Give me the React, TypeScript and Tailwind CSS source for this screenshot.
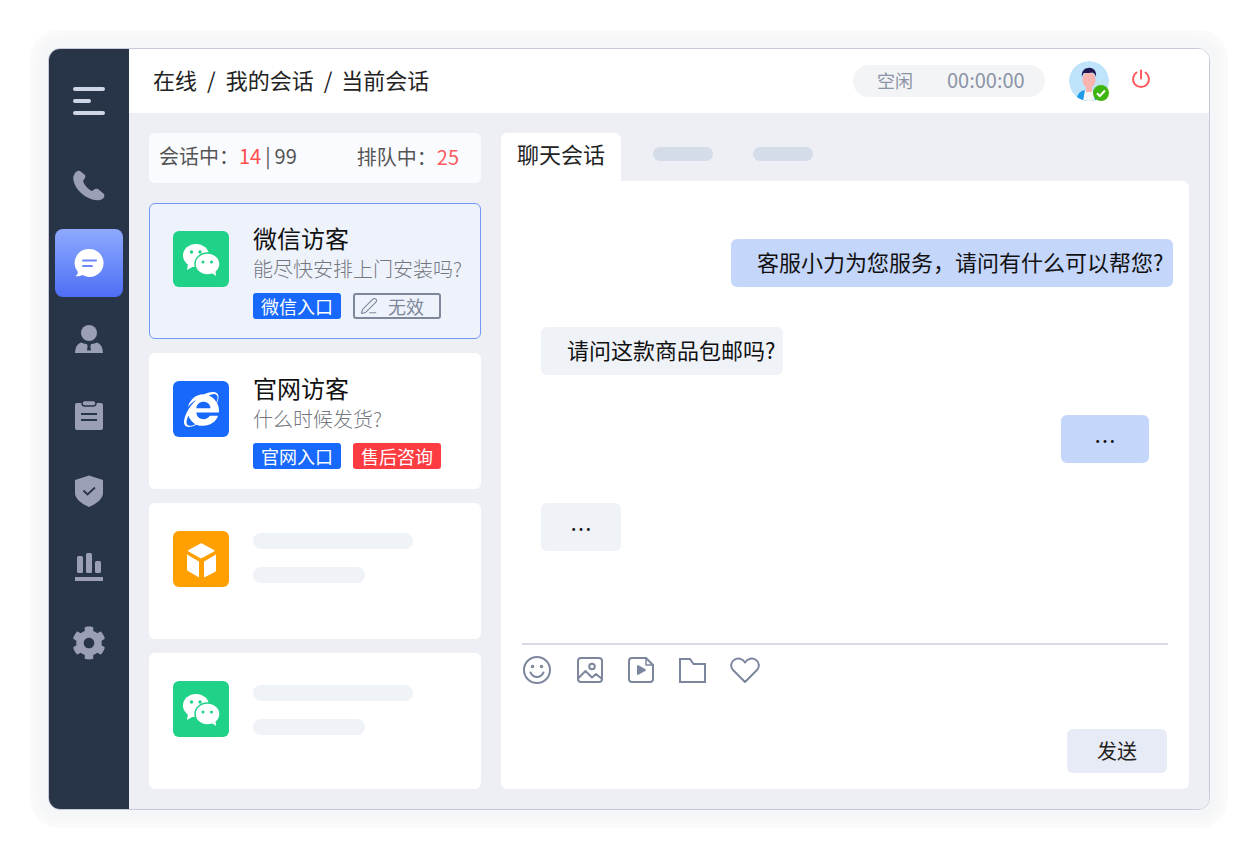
import React from "react";
import { PenLine } from "lucide-react";
import { FaCog, FaInternetExplorer } from "react-icons/fa";

const cjk = { fontFamily: '"Noto Sans CJK SC", "Noto Sans", sans-serif' };

const G = "#9a9fb6";
const COLON = "\uFF1A";
const COMMA = "\uFF0C";

function MenuIcon() {
  return (
    <svg width="32" height="28" viewBox="0 0 32 28" fill="#ced5e4">
      <rect x="0" y="0" width="32" height="4" rx="2" />
      <rect x="0" y="12" width="18" height="4" rx="2" />
      <rect x="0" y="24" width="32" height="4" rx="2" />
    </svg>
  );
}
function PhoneIcon() {
  return (
    <svg width="36" height="36" viewBox="0 0 36 36" fill={G}>
      <path d="M3 6C1 9 3 17 9 23c6 6 14 9 20 8 4-1 5-4 4-6l-6-5c-1-.5-2-.5-3 0l-3 2c-3-1-8-6-9-10l2-3c.5-1 .5-2 0-3L9 2C7 1 4 3 3 6Z" />
    </svg>
  );
}
function ChatIcon() {
  return (
    <svg width="30" height="30" viewBox="0 0 30 30">
      <path d="M15.500 1a14 14 0 1 1-7 26.100c-1.800 .9-4 1.300-7 1.200 1.500-1.300 2.400-2.800 2.500-4.300A14 14 0 0 1 15.500 1Z" fill="#fff" />
      <rect x="8" y="11.500" width="15" height="2" rx="1" fill="#6a86f8" />
      <rect x="8" y="17" width="11" height="2" rx="1" fill="#6a86f8" />
    </svg>
  );
}
function UserIcon() {
  return (
    <svg width="28" height="28" viewBox="0 0 28 28">
      <circle cx="14" cy="8" r="8" fill={G} />
      <path d="M0 28c.5-6 2-9 6-10.500 2.500 1 5 1.500 8 1.500s5.500-.5 8-1.500c4 1.500 5.500 4.500 6 10.500Z" fill={G} />
      <path d="M12 19h4l-.6 2.500.6 4h-4l.6-4Z" fill="#283447" />
    </svg>
  );
}
function ClipIcon() {
  return (
    <svg width="28" height="30" viewBox="0 0 28 30">
      <path d="M2 3h24a2 2 0 0 1 2 2v23a2 2 0 0 1-2 2H2a2 2 0 0 1-2-2V5a2 2 0 0 1 2-2Z" fill={G} />
      <rect x="7" y="0.500" width="14" height="5.500" rx="2.700" fill={G} stroke="#283447" strokeWidth="1.500" />
      <rect x="6" y="13" width="16" height="2" fill="#283447" />
      <rect x="6" y="19" width="16" height="2" fill="#283447" />
    </svg>
  );
}
function ShieldIcon() {
  return (
    <svg width="28" height="32" viewBox="0 0 28 32">
      <path d="M14 0.500 28 5v13c0 6-7 11-14 14C7 29 0 24 0 18V5L14 .5Z" fill={G} />
      <path d="m8.500 15.500 4 4L20 12.500" fill="none" stroke="#283447" strokeWidth="1.800" />
    </svg>
  );
}
function BarsIcon() {
  return (
    <svg width="28" height="28" viewBox="0 0 28 28" fill={G}>
      <rect x="2" y="3" width="6" height="17" rx="1.500" />
      <rect x="11" y="0" width="6" height="20" rx="1.500" />
      <rect x="20" y="8" width="6" height="12" rx="1.500" />
      <rect x="0" y="24" width="28" height="4" />
    </svg>
  );
}

function WeChat() {
  return (
    <svg width="56" height="56" viewBox="0 0 56 56">
      <ellipse cx="23" cy="24.500" rx="13" ry="11.500" fill="#fff" />
      <path d="M15 33l-1 6 7-4Z" fill="#fff" />
      <ellipse cx="34.500" cy="33" rx="12.500" ry="11" fill="#fff" stroke="#20d288" strokeWidth="1.500" />
      <path d="M39 42l4 3-.5-5Z" fill="#fff" />
      <circle cx="18.500" cy="21" r="1.700" fill="#20d288" />
      <circle cx="27" cy="21" r="1.700" fill="#20d288" />
      <circle cx="30" cy="31" r="1.500" fill="#20d288" />
      <circle cx="38.500" cy="31" r="1.500" fill="#20d288" />
    </svg>
  );
}
function Cube() {
  return (
    <svg width="56" height="56" viewBox="0 0 56 56" fill="#fff">
      <path d="M27.500 12.500a2 2 0 0 1 1.500 0l12 6.500a.8 .8 0 0 1 0 1.400L28 27.500 15.500 20.400a.8 .8 0 0 1 0-1.400l12-6.500Z" />
      <path d="M14 23.500 26 30.500V46.500L15 40a2 2 0 0 1-1-2V23.500Z" />
      <path d="M43 23.500 31 30.500V46.500L42 41a2 2 0 0 0 1-2V23.500Z" />
    </svg>
  );
}

function Logo({ bg, children }: { bg: string; children: React.ReactNode }) {
  return (
    <div className={`w-14 h-14 rounded-md shrink-0 flex items-center justify-center ${bg}`}>{children}</div>
  );
}

function Tag({ className, children }: { className: string; children: React.ReactNode }) {
  return (
    <div className={`w-[88px] h-[26px] pb-px rounded-[3px] flex items-center text-[18px] leading-none ${className}`}>
      {children}
    </div>
  );
}

function VisitorCard({
  active,
  logo,
  title,
  sub,
  tags,
}: {
  active?: boolean;
  logo: React.ReactNode;
  title: string;
  sub: string;
  tags: React.ReactNode;
}) {
  return (
    <div
      className={`h-[136px] rounded-md flex gap-6 ${
        active ? "bg-[#eef2fb] border border-[#6f98f7] pl-[23px] pt-[27px]" : "bg-white pl-6 pt-7"
      }`}
    >
      {logo}
      <div className="flex flex-col -mt-[8px]">
        <div className="text-[24px] leading-[30px] text-[#111111]">{title}</div>
        <div className="text-[20px] leading-[28px] font-light text-[#75787f] whitespace-nowrap mt-[2px]">{sub}</div>
        <div className="flex gap-3 mt-[10px]">{tags}</div>
      </div>
    </div>
  );
}

function SkeletonCard({ logo, long }: { logo: React.ReactNode; long?: boolean }) {
  return (
    <div className="h-[136px] bg-white rounded-md flex pl-6 pt-7 gap-6">
      {logo}
      <div className={`flex flex-col ${long ? "pt-[2px]" : "pt-1"} gap-[18px]`}>
        <div className="w-40 h-4 rounded-lg bg-[#eff2f7]" />
        <div className="w-28 h-4 rounded-lg bg-[#eff2f7]" />
      </div>
    </div>
  );
}

function Avatar() {
  return (
    <div className="relative w-10 h-10">
      <svg width="40" height="40" viewBox="0 0 40 40" className="rounded-full">
        <circle cx="20" cy="20" r="20" fill="#bfe3fb" />
        <path d="M7 40c1-7 4-10 9-11h8c5 1 8 4 9 11Z" fill="#1b9be8" />
        <path d="M14 40l2-11h8l2 11Z" fill="#f5f6f8" />
        <rect x="17" y="24" width="6" height="7" fill="#f9b4b0" />
        <ellipse cx="20" cy="19" rx="6.500" ry="8" fill="#f9b4b0" />
        <path d="M13 16c-1-6 3-9 6-9 5-1 9 3 8 9-1-3-2-4-4-4.500-3 .7-6 .7-8 .5-1 1-1.500 2-2 4Z" fill="#1e1650" />
      </svg>
      <div className="absolute right-0 bottom-0 w-4 h-4 rounded-full bg-[#3fb60f] flex items-center justify-center">
        <svg width="12" height="12" viewBox="0 0 12 12" fill="none">
          <path d="m2 6.200 2.800 2.800L10 3.500" stroke="#fff" strokeWidth="2" />
        </svg>
      </div>
    </div>
  );
}

function Power() {
  return (
    <svg width="20" height="20" viewBox="0 0 20 20" fill="none" stroke="#ff5a5f" strokeWidth="2" strokeLinecap="round">
      <path d="M10 1.500v8" />
      <path d="M5.500 3.500a8 8 0 1 0 9 0" />
    </svg>
  );
}

const tb = { fill: "none", stroke: "#7c869d", strokeWidth: 2, strokeLinejoin: "round" as const, strokeLinecap: "round" as const };

function Toolbar() {
  return (
    <div className="flex items-center h-[28px] mt-[11px] pl-px">
      <svg width="28" height="28" viewBox="0 0 28 28" {...tb}>
        <circle cx="14" cy="14" r="13" />
        <path d="M7.500 16.500c1.500 3 4 4.500 6.500 4.500s5-1.500 6.500-4.500" />
        <circle cx="9.500" cy="10.500" r=".8" />
        <circle cx="18.500" cy="10.500" r=".8" />
      </svg>
      <svg width="26" height="26" viewBox="0 0 26 26" className="ml-[26px]" {...tb}>
        <rect x="1" y="1" width="24" height="24" rx="3" />
        <circle cx="15" cy="9.500" r="2.800" />
        <path d="m1.500 21 7-7 6.500 6.500 4-3.500 5.500 4.500" />
      </svg>
      <svg width="26" height="26" viewBox="0 0 26 26" className="ml-[25px]" {...tb}>
        <path d="M4 1h14l7 7v14a3 3 0 0 1-3 3H4a3 3 0 0 1-3-3V4a3 3 0 0 1 3-3Z" />
        <path d="M18 1v7h7" strokeWidth="1.500" />
        <path d="M10 9v8l7-4Z" fill="#7c869d" />
      </svg>
      <svg width="27" height="25" viewBox="0 0 27 25" className="ml-[25px]" {...tb} strokeLinejoin="miter" strokeLinecap="butt">
        <path d="M1 1h10l3.500 5H26v18H1Z" />
      </svg>
      <svg width="30" height="26" viewBox="0 0 30 26" className="ml-[24px]" {...tb}>
        <path d="M15 25 3 13C0 9.500 1 5 4 3c3.500-2.500 8.500-1.500 11 2.500C17.500 1.500 22.500 .5 26 3c3 2 4 6.500 1 10Z" />
      </svg>
    </div>
  );
}

function Bubble({ me, className, children }: { me?: boolean; className: string; children: React.ReactNode }) {
  return (
    <div
      className={`h-12 rounded-md flex items-center text-[22px] leading-none text-[#111111] whitespace-nowrap ${
        me ? "bg-[#c5d6fb]" : "bg-[#eff2f7]"
      } ${className}`}
    >
      {children}
    </div>
  );
}

function NavItem({ active, children }: { active?: boolean; children: React.ReactNode }) {
  return (
    <div
      className={`w-[68px] h-[68px] rounded-lg flex items-center justify-center ${
        active ? "bg-gradient-to-b from-[#8ea9fd] to-[#4f6ef6]" : ""
      }`}
    >
      {children}
    </div>
  );
}

export default function App() {
  return (
    <div className="w-[1258px] h-[858px] bg-white overflow-hidden pl-12 pt-12" style={cjk}>
      <div className="w-[1162px] h-[762px] rounded-xl border border-[#c5c9da] flex overflow-hidden shadow-[0_0_10px_12px_#f5f6f7,0_0_0_18px_#fbfbfc]">
        <aside className="w-20 shrink-0 bg-[#283447] flex flex-col items-center gap-2 pt-[18px]">
          <div className="h-[68px] flex items-center mb-[10px]">
            <MenuIcon />
          </div>
          <NavItem><PhoneIcon /></NavItem>
          <NavItem active><ChatIcon /></NavItem>
          <NavItem><UserIcon /></NavItem>
          <NavItem><ClipIcon /></NavItem>
          <NavItem><ShieldIcon /></NavItem>
          <NavItem><BarsIcon /></NavItem>
          <NavItem><FaCog size={34} color={G} /></NavItem>
        </aside>

        <div className="flex-1 flex flex-col bg-[#eeeff4]">
          <header className="h-16 shrink-0 bg-white flex items-center pl-6 pr-[58px]">
            <div className="text-[22px] leading-none text-[#222222] flex gap-[10px] pb-1">
              <span>在线</span><span>/</span><span>我的会话</span><span>/</span><span className="-ml-px">当前会话</span>
            </div>
            <div className="ml-auto w-48 h-8 rounded-2xl bg-[#f3f4f6] flex items-center pl-6 pb-[2px] text-[#8a93a5]">
              <span className="text-[18px] leading-none">空闲</span>
              <span className="text-[20px] leading-none ml-[34px]">00:00:00</span>
            </div>
            <div className="ml-6"><Avatar /></div>
            <div className="ml-[22px] pb-1"><Power /></div>
          </header>

          <main className="flex-1 flex gap-5 p-5">
            <section className="w-[332px] shrink-0 flex flex-col">
              <div className="h-[50px] rounded-md bg-[#fafbfe] flex items-center justify-between pl-[10px] pr-[22px] text-[20px] leading-none text-[#555555] mb-5">
                <div className="-mt-[4px]">
                  {"会话中" + COLON}<span className="text-[#ff4d4f]">14</span><span className="mx-[4px]">|</span>99
                </div>
                <div className="-mt-[2px]">
                  {"排队中" + COLON}<span className="text-[#ff5a5f]">25</span>
                </div>
              </div>
              <div className="flex flex-col gap-[14px]">
                <VisitorCard
                  active
                  logo={<Logo bg="bg-[#20d288]"><WeChat /></Logo>}
                  title="微信访客"
                  sub="能尽快安排上门安装吗?"
                  tags={
                    <>
                      <Tag className="bg-[#1768fb] text-white justify-center">微信入口</Tag>
                      <Tag className="border-2 border-[#7e879c] text-[#7e879c] pl-[5px] gap-[10px]">
                        <PenLine size={18} strokeWidth={1.5} />
                        <span>无效</span>
                      </Tag>
                    </>
                  }
                />
                <VisitorCard
                  logo={
                    <Logo bg="bg-[#1768fb]">
                      <FaInternetExplorer size={35} color="#fff" />
                    </Logo>
                  }
                  title="官网访客"
                  sub="什么时候发货?"
                  tags={
                    <>
                      <Tag className="bg-[#1768fb] text-white justify-center">官网入口</Tag>
                      <Tag className="bg-[#fd3c41] text-white justify-center">售后咨询</Tag>
                    </>
                  }
                />
                <SkeletonCard logo={<Logo bg="bg-[#ff9f00]"><Cube /></Logo>} long />
                <SkeletonCard logo={<Logo bg="bg-[#20d288]"><WeChat /></Logo>} />
              </div>
            </section>

            <section className="flex-1 flex flex-col">
              <div className="h-12 flex shrink-0">
                <div className="w-[120px] h-12 rounded-t-md bg-white flex items-center justify-center text-[22px] leading-none text-[#222222] pb-2">
                  聊天会话
                </div>
                <div className="w-[60px] h-[14px] rounded-lg bg-[#d5dce9] ml-8 mt-[14px]" />
                <div className="w-[60px] h-[14px] rounded-lg bg-[#d5dce9] ml-10 mt-[14px]" />
              </div>
              <div className="flex-1 bg-white rounded-b-md rounded-tr-md flex flex-col">
                <div className="h-[462px] shrink-0 flex flex-col pt-[58px] pr-4 pl-10 gap-10">
                  <Bubble me className="self-end w-[442px] pl-[26px] pb-1">{"客服小力为您服务" + COMMA + "请问有什么可以帮您?"}</Bubble>
                  <Bubble className="self-start w-[242px] pl-[26px] pb-1">请问这款商品包邮吗?</Bubble>
                  <Bubble me className="self-end w-[88px] mr-6 justify-center">…</Bubble>
                  <Bubble className="self-start w-20 justify-center">…</Bubble>
                </div>
                <div className="mx-[21px] border-t-2 border-[#d9dbe3]">
                  <Toolbar />
                </div>
                <div className="flex justify-end pr-[22px] mt-[45px]">
                  <div className="w-[100px] h-11 rounded-md bg-[#e7ebf5] flex items-center justify-center text-[20px] leading-none text-[#222222]">
                    发送
                  </div>
                </div>
              </div>
            </section>
          </main>
        </div>
      </div>
    </div>
  );
}
